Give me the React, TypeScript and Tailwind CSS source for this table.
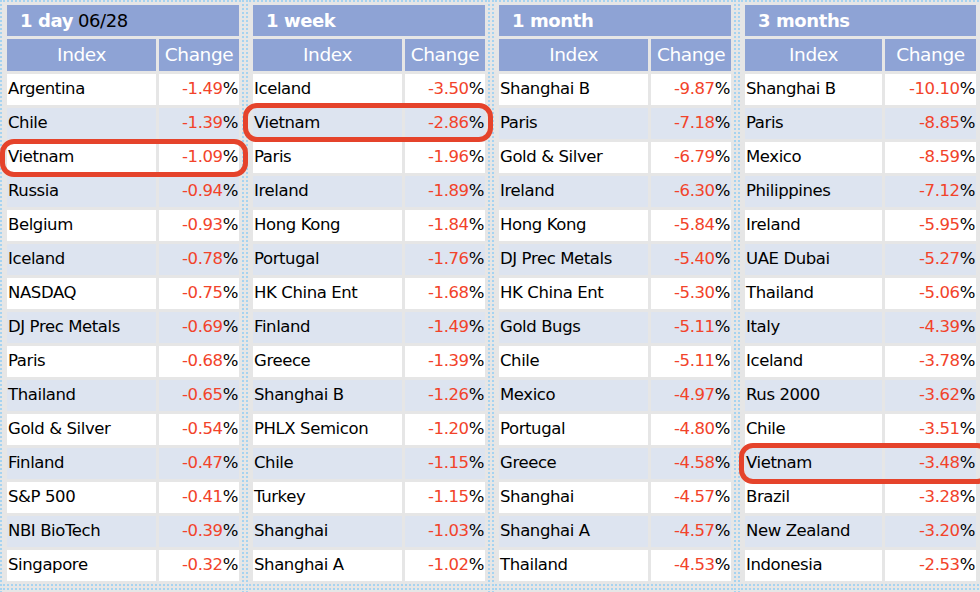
import React from "react";

type Row = [string, string];

type Panel = {
  title: string;
  date?: string;
  indexW: string;
  changeW: string;
  rows: Row[];
};

const panels: Panel[] = [
  {
    title: "1 day",
    date: "06/28",
    indexW: "w-[150px]",
    changeW: "w-[80px]",
    rows: [
      ["Argentina", "-1.49"],
      ["Chile", "-1.39"],
      ["Vietnam", "-1.09"],
      ["Russia", "-0.94"],
      ["Belgium", "-0.93"],
      ["Iceland", "-0.78"],
      ["NASDAQ", "-0.75"],
      ["DJ Prec Metals", "-0.69"],
      ["Paris", "-0.68"],
      ["Thailand", "-0.65"],
      ["Gold & Silver", "-0.54"],
      ["Finland", "-0.47"],
      ["S&P 500", "-0.41"],
      ["NBI BioTech", "-0.39"],
      ["Singapore", "-0.32"],
    ],
  },
  {
    title: "1 week",
    indexW: "w-[149px]",
    changeW: "w-[80px]",
    rows: [
      ["Iceland", "-3.50"],
      ["Vietnam", "-2.86"],
      ["Paris", "-1.96"],
      ["Ireland", "-1.89"],
      ["Hong Kong", "-1.84"],
      ["Portugal", "-1.76"],
      ["HK China Ent", "-1.68"],
      ["Finland", "-1.49"],
      ["Greece", "-1.39"],
      ["Shanghai B", "-1.26"],
      ["PHLX Semicon", "-1.20"],
      ["Chile", "-1.15"],
      ["Turkey", "-1.15"],
      ["Shanghai", "-1.03"],
      ["Shanghai A", "-1.02"],
    ],
  },
  {
    title: "1 month",
    indexW: "w-[151px]",
    changeW: "w-[80px]",
    rows: [
      ["Shanghai B", "-9.87"],
      ["Paris", "-7.18"],
      ["Gold & Silver", "-6.79"],
      ["Ireland", "-6.30"],
      ["Hong Kong", "-5.84"],
      ["DJ Prec Metals", "-5.40"],
      ["HK China Ent", "-5.30"],
      ["Gold Bugs", "-5.11"],
      ["Chile", "-5.11"],
      ["Mexico", "-4.97"],
      ["Portugal", "-4.80"],
      ["Greece", "-4.58"],
      ["Shanghai", "-4.57"],
      ["Shanghai A", "-4.57"],
      ["Thailand", "-4.53"],
    ],
  },
  {
    title: "3 months",
    indexW: "w-[137px]",
    changeW: "w-[91px]",
    rows: [
      ["Shanghai B", "-10.10"],
      ["Paris", "-8.85"],
      ["Mexico", "-8.59"],
      ["Philippines", "-7.12"],
      ["Ireland", "-5.95"],
      ["UAE Dubai", "-5.27"],
      ["Thailand", "-5.06"],
      ["Italy", "-4.39"],
      ["Iceland", "-3.78"],
      ["Rus 2000", "-3.62"],
      ["Chile", "-3.51"],
      ["Vietnam", "-3.48"],
      ["Brazil", "-3.28"],
      ["New Zealand", "-3.20"],
      ["Indonesia", "-2.53"],
    ],
  },
];

const PanelTable = ({ panel }: { panel: Panel }) => (
  <div className="w-[244px] shrink-0 border-2 border-dotted border-[#a6d3f0] pl-[2px]">
    <table className="border-separate border-spacing-[3px]">
      <thead>
        <tr>
          <th
            colSpan={2}
            className="h-[31px] bg-[#8ea3d5] pl-[13px] text-left text-[18px] font-bold text-white"
          >
            {panel.title}
            {panel.date && <span className="ml-[5px] font-normal text-black">{panel.date}</span>}
          </th>
        </tr>
        <tr>
          <th className={`h-[32px] ${panel.indexW} bg-[#8ea3d5] text-center text-[18.5px] font-normal text-white`}>
            Index
          </th>
          <th className={`h-[32px] ${panel.changeW} bg-[#8ea3d5] text-center text-[18.5px] font-normal text-white`}>
            Change
          </th>
        </tr>
      </thead>
      <tbody>
        {panel.rows.map(([name, change], idx) => (
          <tr key={idx} className={idx % 2 === 0 ? "bg-white" : "bg-[#dde4f0]"}>
            <td className="h-[31px] pl-[1px] text-left text-[16.5px] text-black">{name}</td>
            <td className="h-[31px] pr-[1px] text-right text-[16.5px] text-black">
              <span className="text-[#f2432a]">{change}</span>%
            </td>
          </tr>
        ))}
      </tbody>
    </table>
  </div>
);

export default function App() {
  return (
    <div
      className="relative h-[592px] w-[980px] overflow-hidden bg-[#e6e6e6]"
      style={{ fontFamily: '"DejaVu Sans", Verdana, sans-serif', letterSpacing: "-0.4px" }}
    >
      <div className="flex gap-[2px]">
        {panels.map((p) => (
          <PanelTable key={p.title} panel={p} />
        ))}
      </div>
      <div className="mt-[2px] flex gap-[2px]">
        {panels.map((p) => (
          <div key={p.title} className="h-[20px] w-[244px] shrink-0 border-2 border-dotted border-[#a6d3f0]" />
        ))}
      </div>

      {/* highlight boxes */}
      <div className="pointer-events-none absolute left-[0px] top-[139px] h-[38px] w-[248px] rounded-[14px] border-[5px] border-[#e5432b]" />
      <div className="pointer-events-none absolute left-[243px] top-[103px] h-[39px] w-[250px] rounded-[14px] border-[5px] border-[#e5432b]" />
      <div className="pointer-events-none absolute left-[739px] top-[443px] h-[41px] w-[252px] rounded-[14px] border-[5px] border-[#e5432b]" />
    </div>
  );
}
